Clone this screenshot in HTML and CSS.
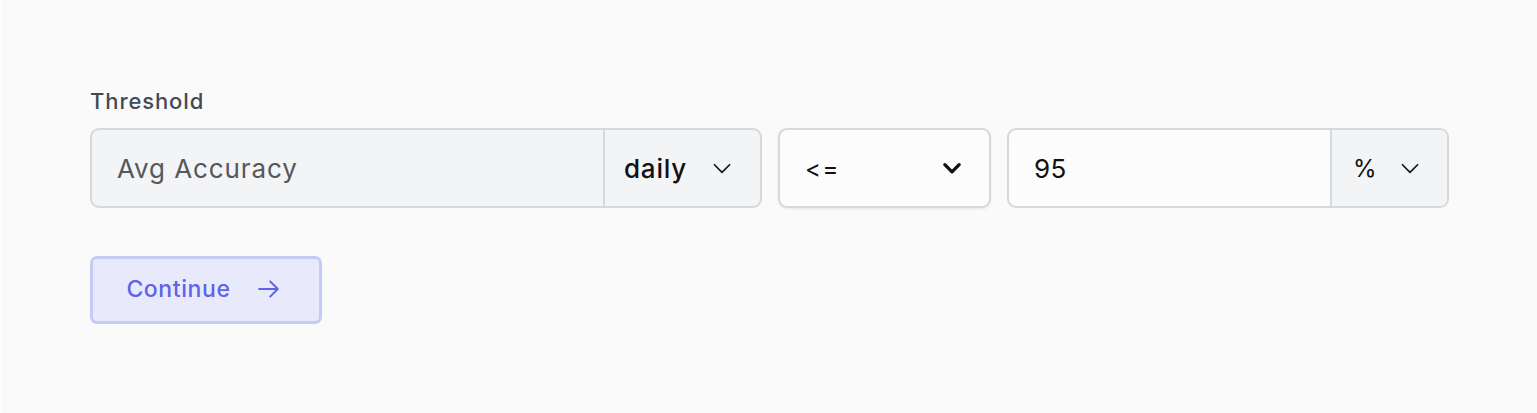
FILE: index.html
```html
<!DOCTYPE html>
<html>
<head>
<meta charset="utf-8">
<link rel="stylesheet" href="styles.css">
</head>
<body>
<div class="page">
  <div class="field">
    <div class="label">Threshold</div>
    <div class="row">
      <div class="group group-metric">
        <div class="cell cell-metric">Avg Accuracy</div>
        <div class="cell cell-period">
          <span>daily</span>
          <svg class="chev" viewBox="0 0 24 24" width="24" height="24"><path d="M5 9l7 7 7-7" fill="none" stroke="currentColor" stroke-width="1.6" stroke-linecap="round" stroke-linejoin="round"/></svg>
        </div>
      </div>
      <div class="select-op">
        <span>&lt;=</span>
        <svg class="chev-bold" viewBox="0 0 20 20" width="20" height="20"><path d="M3.5 7l6.5 6.5L16.5 7" fill="none" stroke="currentColor" stroke-width="3" stroke-linecap="round" stroke-linejoin="round"/></svg>
      </div>
      <div class="group group-value">
        <div class="cell cell-value">95</div>
        <div class="cell cell-unit">
          <span>%</span>
          <svg class="chev" viewBox="0 0 24 24" width="24" height="24"><path d="M5 9l7 7 7-7" fill="none" stroke="currentColor" stroke-width="1.6" stroke-linecap="round" stroke-linejoin="round"/></svg>
        </div>
      </div>
    </div>
  </div>
  <button class="btn">
    <span>Continue</span>
    <svg viewBox="0 0 24 24" width="28" height="28"><path d="M3.5 12h16M13 5.5l6.5 6.5-6.5 6.5" fill="none" stroke="currentColor" stroke-width="1.7" stroke-linecap="round" stroke-linejoin="round"/></svg>
  </button>
</div>
</body>
</html>
```
FILE: styles.css
```css
html, body {
  margin: 0;
  padding: 0;
}
body {
  background: #fafafa;
  font-family: Inter, "Noto Sans", sans-serif;
  width: 1537px;
  height: 413px;
  overflow: hidden;
  border-left: 1px solid #ffffff;
  box-sizing: border-box;
}
.page {
  padding: 86px 0 0 89px;
}
.label {
  font-size: 22px;
  font-weight: 500;
  color: #434a56;
  line-height: 31px;
  margin-bottom: 11px;
  letter-spacing: 0.9px;
}
.row {
  display: flex;
  gap: 16px;
  height: 80px;
}
.group {
  display: flex;
  border: 2px solid #d6d8dc;
  border-radius: 9px;
  overflow: hidden;
  box-sizing: border-box;
}
.group-metric {
  width: 672px;
  background: #f3f4f6;
}
.cell {
  display: flex;
  align-items: center;
  box-sizing: border-box;
}
.cell-metric {
  flex: 1;
  padding-left: 25px;
  font-size: 26px;
  color: #55575c;
  letter-spacing: 0.9px;
  border-right: 2px solid #d6d8dc;
}
.cell-period {
  width: 155px;
  padding-left: 19px;
  font-size: 26px;
  font-weight: 500;
  color: #111111;
  letter-spacing: 0.8px;
  gap: 22px;
}
.chev {
  color: #1a1a1a;
  width: 26px;
  height: 26px;
}
.select-op {
  width: 213px;
  box-sizing: border-box;
  border: 2px solid #d6d8dc;
  border-radius: 9px;
  background: #fcfcfc;
  box-shadow: 0 1px 3px rgba(0,0,0,0.08);
  display: flex;
  align-items: center;
  justify-content: space-between;
  padding: 0 26px 0 25px;
  font-size: 24px;
  color: #111111;
  letter-spacing: 1.5px;
}
.chev-bold {
  color: #111111;
  width: 22px;
  height: 22px;
}
.group-value {
  width: 442px;
  background: #fcfcfc;
}
.cell-value {
  flex: 1;
  padding-left: 25px;
  font-size: 26px;
  color: #111111;
  letter-spacing: 0.5px;
  border-right: 2px solid #d6d8dc;
}
.cell-unit {
  width: 115px;
  background: #f3f4f6;
  padding-left: 21px;
  font-size: 24px;
  color: #111111;
  gap: 20px;
}
.btn {
  margin-top: 48px;
  width: 232px;
  height: 68px;
  box-sizing: border-box;
  border: 3px solid #c4cbf7;
  border-radius: 7px;
  background: #e8eafb;
  color: #6062e8;
  font-family: Inter, "Noto Sans", sans-serif;
  font-size: 23px;
  font-weight: 500;
  letter-spacing: 0.6px;
  display: flex;
  align-items: center;
  justify-content: center;
  gap: 24px;
  padding: 0 3px 2px 0;
  cursor: pointer;
}
```
